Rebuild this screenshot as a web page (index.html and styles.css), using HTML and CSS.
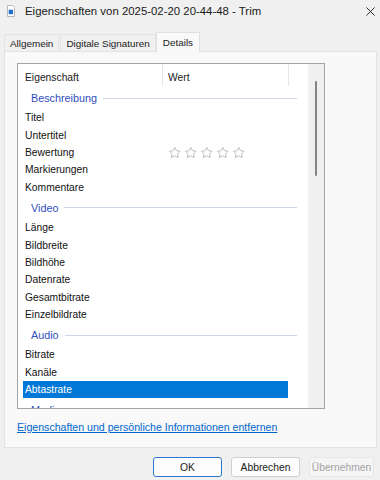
FILE: index.html
```html
<!DOCTYPE html>
<html lang="de">
<head>
<meta charset="utf-8">
<title>Eigenschaften</title>
<link rel="stylesheet" href="styles.css">
</head>
<body>
<div class="titlebar">
  <svg class="doc-icon" viewBox="0 0 8 12" width="8" height="12">
    <path d="M0.5 0.5h5l2 2v9h-7z" fill="#fff" stroke="#b8b8b8" stroke-width="1"/>
    <rect x="1.7" y="4.7" width="4.3" height="4.5" fill="#1f6fd1"/>
  </svg>
  <span class="title">Eigenschaften von 2025-02-20 20-44-48 - Trim</span>
  <svg class="close" viewBox="0 0 10 10" width="10" height="10">
    <path d="M0.5 0.5L9.5 9.5M9.5 0.5L0.5 9.5" stroke="#1a1a1a" stroke-width="1" fill="none"/>
  </svg>
</div>
<div class="tabs">
  <div class="tab">Allgemein</div>
  <div class="tab">Digitale Signaturen</div>
  <div class="tab tab-active">Details</div>
</div>
<div class="panel">
  <div class="list">
    <div class="content">
      <div class="header">
        <div class="hcell hcell-name">Eigenschaft</div>
        <div class="hcell hcell-val">Wert</div>
        <div class="hcell hcell-rest"></div>
      </div>
      <div class="group"><span>Beschreibung</span><span class="rule"></span></div>
      <div class="item"><span class="name">Titel</span></div>
      <div class="item"><span class="name">Untertitel</span></div>
      <div class="item"><span class="name">Bewertung</span>
        <span class="val">
          <svg class="star" viewBox="0 0 24 24"><path d="M12 2.2l2.95 6.2 6.75.85-4.95 4.7 1.3 6.75L12 17.4l-6.05 3.3 1.3-6.75-4.95-4.7 6.75-.85z"/></svg>
          <svg class="star" viewBox="0 0 24 24"><path d="M12 2.2l2.95 6.2 6.75.85-4.95 4.7 1.3 6.75L12 17.4l-6.05 3.3 1.3-6.75-4.95-4.7 6.75-.85z"/></svg>
          <svg class="star" viewBox="0 0 24 24"><path d="M12 2.2l2.95 6.2 6.75.85-4.95 4.7 1.3 6.75L12 17.4l-6.05 3.3 1.3-6.75-4.95-4.7 6.75-.85z"/></svg>
          <svg class="star" viewBox="0 0 24 24"><path d="M12 2.2l2.95 6.2 6.75.85-4.95 4.7 1.3 6.75L12 17.4l-6.05 3.3 1.3-6.75-4.95-4.7 6.75-.85z"/></svg>
          <svg class="star" viewBox="0 0 24 24"><path d="M12 2.2l2.95 6.2 6.75.85-4.95 4.7 1.3 6.75L12 17.4l-6.05 3.3 1.3-6.75-4.95-4.7 6.75-.85z"/></svg>
        </span>
      </div>
      <div class="item"><span class="name">Markierungen</span></div>
      <div class="item"><span class="name">Kommentare</span></div>
      <div class="group"><span>Video</span><span class="rule"></span></div>
      <div class="item"><span class="name">Länge</span></div>
      <div class="item"><span class="name">Bildbreite</span></div>
      <div class="item"><span class="name">Bildhöhe</span></div>
      <div class="item"><span class="name">Datenrate</span></div>
      <div class="item"><span class="name">Gesamtbitrate</span></div>
      <div class="item"><span class="name">Einzelbildrate</span></div>
      <div class="group"><span>Audio</span><span class="rule"></span></div>
      <div class="item"><span class="name">Bitrate</span></div>
      <div class="item"><span class="name">Kanäle</span></div>
      <div class="item item-selected"><span class="name">Abtastrate</span></div>
      <div class="group"><span>Medien</span><span class="rule"></span></div>
    </div>
    <div class="scrollbar"><div class="thumb"></div></div>
  </div>
  <a class="link" href="#">Eigenschaften und persönliche Informationen entfernen</a>
</div>
<div class="footer">
  <div class="btn btn-default">OK</div>
  <div class="btn">Abbrechen</div>
  <div class="btn btn-disabled">Übernehmen</div>
</div>
</body>
</html>
```
FILE: styles.css
```css
html, body {
  margin: 0;
  padding: 0;
}
body {
  width: 380px;
  height: 480px;
  overflow: hidden;
  background: #f0f0f0;
  font-family: "Liberation Sans", Arial, sans-serif;
  font-size: 10.3px;
  color: #000;
}

/* title bar */
.titlebar {
  height: 22px;
  display: flex;
  align-items: center;
  padding-left: 7px;
}
.doc-icon {
  width: 8px;
  height: 12px;
  margin-right: 10px;
  flex: none;
}
.title {
  flex: 1;
  font-size: 11.4px;
  color: #1a1a1a;
}
.close {
  width: 9px;
  height: 9px;
  margin-right: 5px;
}

/* tabs */
.tabs {
  display: flex;
  align-items: flex-end;
  height: 19px;
  margin-top: 10px;
  padding-left: 4px;
  font-size: 9.9px;
}
.tab {
  height: 17px;
  box-sizing: border-box;
  padding: 0 5px;
  display: flex;
  align-items: center;
  border: 1px solid #e3e3e3;
  border-bottom: none;
  background: #f0f0f0;
  color: #1a1a1a;
}
.tab + .tab {
  margin-left: 1px;
}
.tab-active {
  height: 20px;
  padding: 0 6px 1px;
  margin-bottom: -1px;
  margin-left: 0 !important;
  background: #f9f9f9;
  border-color: #e0e0e0;
  position: relative;
  z-index: 1;
}

/* panel */
.panel {
  margin: 0 3px 0 4px;
  height: 397px;
  box-sizing: border-box;
  border: 1px solid #e3e3e3;
  background: #f9f9f9;
  padding: 11px 0 0 12px;
}
.list {
  width: 308px;
  height: 346px;
  box-sizing: border-box;
  border: 1px solid #a3a3a3;
  background: #fff;
  display: grid;
  grid-template-columns: 1fr 16px;
  overflow: hidden;
}
.content {
  overflow: hidden;
}
.scrollbar {
  background: #f0f0f0;
  display: flex;
  justify-content: center;
  padding-top: 17px;
}
.thumb {
  width: 2px;
  height: 95px;
  background: #858585;
  border-radius: 1px;
}

.header {
  display: flex;
  height: 22px;
}
.hcell {
  box-sizing: border-box;
  padding-top: 7px;
  line-height: 13px;
  color: #1a1a1a;
}
.hcell-name {
  width: 144px;
  padding-left: 7px;
}
.hcell-val {
  width: 126px;
  padding-left: 5px;
  border-left: 1px solid #e5e5e5;
}
.hcell-rest {
  flex: 1;
  border-left: 1px solid #e5e5e5;
}

.group {
  height: 23px;
  display: flex;
  align-items: center;
  padding: 1px 11px 0 13px;
  box-sizing: border-box;
  color: #2f4ebd;
  font-size: 10.8px;
}
.rule {
  flex: 1;
  height: 1px;
  margin-left: 6px;
  background: #cdd6ec;
}

.item {
  height: 17.4px;
  width: 265px;
  margin-left: 5px;
  padding-left: 2px;
  box-sizing: border-box;
  display: flex;
  align-items: center;
  color: #111;
}
.name {
  width: 137px;
  flex: none;
}
.val {
  display: flex;
  gap: 2.5px;
  padding-left: 6px;
}
.star {
  width: 13.5px;
  height: 13.5px;
  fill: none;
  stroke: #b9b9b9;
  stroke-width: 1.6;
  stroke-linejoin: round;
}
.item-selected {
  background: #0078d7;
  color: #fff;
}

.link {
  display: inline-block;
  margin-top: 11px;
  line-height: 14px;
  font-size: 10.6px;
  color: #0066cc;
  text-decoration: underline;
}

/* footer */
.footer {
  display: flex;
  justify-content: flex-end;
  gap: 9px;
  margin-top: 9px;
  padding-right: 6px;
}
.btn {
  width: 69px;
  height: 20px;
  box-sizing: border-box;
  border: 1px solid #d0d0d0;
  border-radius: 3px;
  background: #fdfdfd;
  display: flex;
  align-items: center;
  justify-content: center;
  color: #1a1a1a;
}
.btn-default {
  border-color: #2a78d2;
}
.btn-disabled {
  width: 65px;
  background: #f5f5f5;
  border-color: #e6e6e6;
  color: #a3a3a3;
}
```
